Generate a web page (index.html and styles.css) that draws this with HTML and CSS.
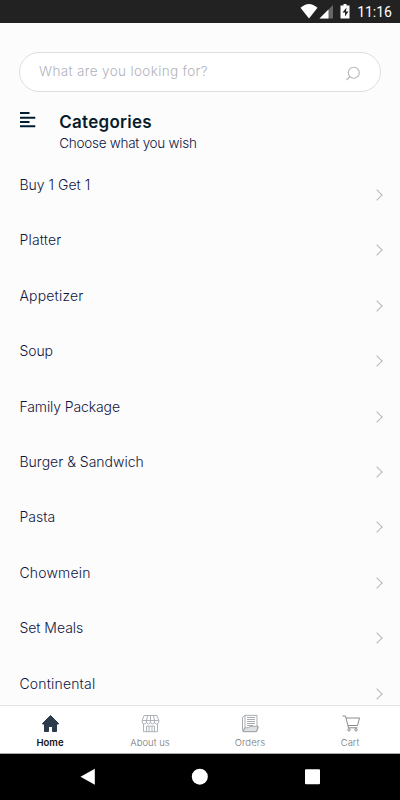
FILE: index.html
```html
<!DOCTYPE html>
<html lang="en">
<head>
<meta charset="utf-8">
<title>Categories</title>
<link rel="stylesheet" href="styles.css">
</head>
<body>
<header class="status">
  <svg class="status-icons" width="54" height="23" viewBox="0 0 54 23">
    <path fill="#fff" d="M.5 7.800Q9 0 17.500 7.800L9 18.500Z"/>
    <path fill="#666" d="M33 5v13.500H19.500Z"/>
    <path fill="#fff" d="M28.500 9.500v9H19.500Z"/>
    <path fill="#fff" d="M43.500 4h3v1.500h3V18.500h-9V5.500h3Z"/>
    <path fill="#222" d="M46.500 7.500l-4 5h2.500v4l3.500-5H46Z"/>
  </svg>
  <time class="clock">11:16</time>
</header>
<main class="content">
  <div class="search">
    <span class="placeholder">What are you looking for?</span>
    <svg width="16" height="16" viewBox="0 0 16 16" fill="none" stroke="#b8b8b8" stroke-width="1.150"><circle cx="8.800" cy="6.700" r="5.500"/><path d="M5 10.500L1.500 14"/></svg>
  </div>
  <section class="heading">
    <svg width="16" height="16" viewBox="0 0 16 16" fill="#001c30"><path d="M0 0h9.500v2H0zM0 4.700h15.300v2H0zM0 9h9.500v2H0zM0 13.300h15.300v2H0z"/></svg>
    <div>
      <h1>Categories</h1>
      <p>Choose what you wish</p>
    </div>
  </section>
  <ul class="list">
    <li><span class="buy">Buy 1 Get 1</span><i class="chevron"></i></li>
    <li><span class="platter">Platter</span><i class="chevron"></i></li>
    <li><span class="appetizer">Appetizer</span><i class="chevron"></i></li>
    <li><span class="soup">Soup</span><i class="chevron"></i></li>
    <li><span class="family">Family Package</span><i class="chevron"></i></li>
    <li><span class="burger">Burger &amp; Sandwich</span><i class="chevron"></i></li>
    <li><span class="pasta">Pasta</span><i class="chevron"></i></li>
    <li><span class="chowmein">Chowmein</span><i class="chevron"></i></li>
    <li><span class="meals">Set Meals</span><i class="chevron"></i></li>
    <li><span class="continental">Continental</span><i class="chevron"></i></li>
  </ul>
</main>
<nav class="tabs">
  <a class="tab active">
    <svg width="20" height="20" viewBox="0 0 20 20"><path fill="#2b3b4c" stroke="#2b3b4c" stroke-linejoin="round" d="M10.500 1.500L2.500 9.500v.5h2v7.500h4v-5h4v5h4V10h2v-.5Z"/></svg>
    <span>Home</span>
  </a>
  <a class="tab about">
    <svg width="20" height="20" viewBox="0 0 20 20" fill="none" stroke="#a5aab1" stroke-width=".9"><path d="M4 1.500h13l1.800 5v1.500q-.5 2-2.200 2T14.500 8q-.5 2-2 2t-2-2q-.5 2-2 2t-2-2q-.5 2-2.300 2t-2-2V6.500ZM2.300 6.500h16.500M7.500 1.500l-1 5V8M10.500 1.500V8M13.500 1.500l1 5V8M3.500 10v7.700h14V10M6.500 17.700v-5.500h8v5.500M9 12.200v5.500M12 12.200v5.500"/></svg>
    <span>About us</span>
  </a>
  <a class="tab orders">
    <svg width="20" height="20" viewBox="0 0 20 20" fill="none" stroke="#9fa4a9" stroke-width=".9"><path fill="#dfe1e3" d="M5 13.800q4 .5 6-1.500h7L16.500 17.600H3Z"/><path d="M5 1.400h12v10.500q2 .5 1 2.600l-1.500 3.100H4.500q-2 0-2-2V3.500l2.500-2.100v11.500L3 17"/><path stroke="#8d9297" stroke-width=".75" d="M7 3.500h8M7 5.500h8M7 7.500h8M7 9.500h8M7 11.500h6"/></svg>
    <span>Orders</span>
  </a>
  <a class="tab cart">
    <svg width="20" height="20" viewBox="0 0 20 20" fill="none" stroke="#858585" stroke-width=".95"><path d="M2.500 2h3L8.500 13.800h9M6.200 4H19.500L17.500 11.500H8"/><circle cx="9" cy="15.800" r="1.200"/><circle cx="16" cy="15.800" r="1.200"/></svg>
    <span>Cart</span>
  </a>
</nav>
<footer class="system">
  <svg width="240" height="18" viewBox="0 0 240 18" fill="#fff"><path d="M.5 8.800L14.800 .8v16Z"/><circle cx="119.800" cy="8.700" r="8"/><rect x="225" y="1.200" width="15" height="15" rx="1"/></svg>
</footer>
</body>
</html>
```
FILE: styles.css
```css
* { box-sizing: border-box; }
body {
  margin: 0;
  height: 800px;
  overflow: hidden;
  display: flex;
  flex-direction: column;
  background: #fcfcfc;
  color: #10163f;
  font-family: Inter, "Liberation Sans", sans-serif;
}
.status {
  height: 23px;
  flex: none;
  display: flex;
  justify-content: flex-end;
  align-items: center;
  gap: 2px;
  padding-right: 8px;
  background: #222;
  color: #fff;
}
.status-icons { margin-right: 1px; }
.clock { font: 400 14px/23px Roboto, sans-serif; padding-top: 2px; }
.content { flex: 1; min-height: 0; overflow: hidden; padding: 29px 19px 0; }
.search {
  height: 40px;
  display: flex;
  align-items: center;
  justify-content: space-between;
  padding: 0 19px 0 19px;
  border: 1px solid #dedede;
  border-radius: 20px;
  background: #fff;
}
.search svg { margin-top: 3px; }
.placeholder { font-size: 13.5px; font-weight: 300; letter-spacing: .35px; color: #b0b2bc; margin-top: -2px; }
.heading { display: flex; gap: 23.7px; margin: 20px 0 0 .5px; height: 49px; }
h1 { margin: 0; font-size: 17px; line-height: 20px; font-weight: 600; letter-spacing: .28px; color: #071b2b; }
p { margin: 2px 0 0; font-size: 13.5px; line-height: 18px; font-weight: 300; letter-spacing: -.26px; }
.list { margin: 0; padding: 0 0 0 .5px; list-style: none; }
.list li {
  height: 55.4px;
  display: flex;
  justify-content: space-between;
  align-items: flex-start;
  padding-top: 14px;
  font-size: 14px;
  line-height: 20px;
  font-weight: 300;
}
.platter, .appetizer { letter-spacing: .18px; }
.chowmein, .continental { letter-spacing: .17px; }
.soup, .family { letter-spacing: -.12px; }
.meals { letter-spacing: -.05px; }
.chevron {
  width: 8px;
  height: 8px;
  margin: 16px 0 0;
  border: solid #b8b8b8;
  border-width: 1px 1px 0 0;
  transform: rotate(45deg);
}
.tabs {
  height: 49px;
  flex: none;
  display: flex;
  border-top: 1px solid #e2e2e2;
  border-bottom: 1px solid #aaa;
  background: #fff;
}
.tab {
  flex: 1;
  display: flex;
  flex-direction: column;
  align-items: center;
  padding-top: 8px;
  font-size: 9.5px;
  line-height: 17px;
  font-weight: 300;
  color: #777;
}
.orders { letter-spacing: .1px; }
.active { color: #111; font-weight: 600; }
.system {
  height: 46px;
  flex: none;
  display: flex;
  justify-content: center;
  align-items: center;
  background: #000;
}
```
